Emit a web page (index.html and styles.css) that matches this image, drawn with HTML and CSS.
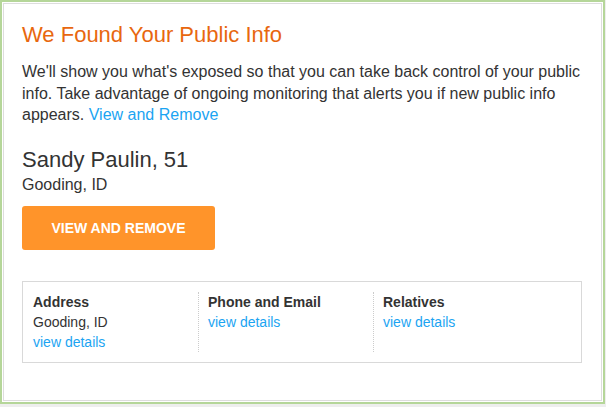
FILE: index.html
```html
<!DOCTYPE html>
<html lang="en">
<head>
    <meta charset="UTF-8">
    <title>Public Info</title>
    <link rel="stylesheet" href="styles.css">
</head>
<body>
    <div class="frame">
        <div class="card">
            <h1 class="title">We Found Your Public Info</h1>
            <p class="intro">We'll show you what's exposed so that you can take back control of your public info. Take advantage of ongoing monitoring that alerts you if new public info appears. <a href="#">View and Remove</a></p>
            <div class="person">
                <div class="name">Sandy Paulin, 51</div>
                <div class="place">Gooding, ID</div>
            </div>
            <button class="btn">VIEW AND REMOVE</button>
            <div class="details">
                <div class="col">
                    <strong>Address</strong>
                    <span>Gooding, ID</span>
                    <a href="#">view details</a>
                </div>
                <div class="col">
                    <strong>Phone and Email</strong>
                    <a href="#">view details</a>
                </div>
                <div class="col">
                    <strong>Relatives</strong>
                    <a href="#">view details</a>
                </div>
            </div>
        </div>
    </div>
</body>
</html>
```

FILE: styles.css
```css
* { margin: 0; padding: 0; box-sizing: border-box; }
body {
    background: #eeeeee;
    font-family: "Liberation Sans", Arial, sans-serif;
    color: #333333;
}
a { color: #1ba4f2; text-decoration: none; }
.frame {
    width: 605px;
    height: 404px;
    border: 2px solid #b5d699;
    background: #ffffff;
    padding: 1px;
}
.card {
    height: 100%;
    border: 1px solid #dddddd;
    padding: 18px 19px 0 18px;
}
.title {
    font-size: 22px;
    font-weight: normal;
    color: #e8670f;
    line-height: 26px;
    margin-bottom: 13px;
}
.intro {
    font-size: 16px;
    line-height: 21.5px;
}
.person { margin-top: 21px; }
.name { font-size: 22px; line-height: 26px; }
.place { font-size: 16px; line-height: 24px; }
.btn {
    margin-top: 9px;
    width: 193px;
    height: 44px;
    border: none;
    border-radius: 3px;
    background: #ff942a;
    color: #ffffff;
    font-family: inherit;
    font-size: 14px;
    font-weight: bold;
}
.details {
    margin-top: 31px;
    width: 560px;
    border: 1px solid #d9d9d9;
    display: flex;
    padding: 10px 0;
}
.col {
    width: 175px;
    padding-left: 10px;
    display: flex;
    flex-direction: column;
    font-size: 14px;
    line-height: 20px;
    min-height: 60px;
}
.col + .col {
    border-left: 1px dotted #cccccc;
    padding-left: 9px;
}
.col strong { font-weight: bold; }
```
